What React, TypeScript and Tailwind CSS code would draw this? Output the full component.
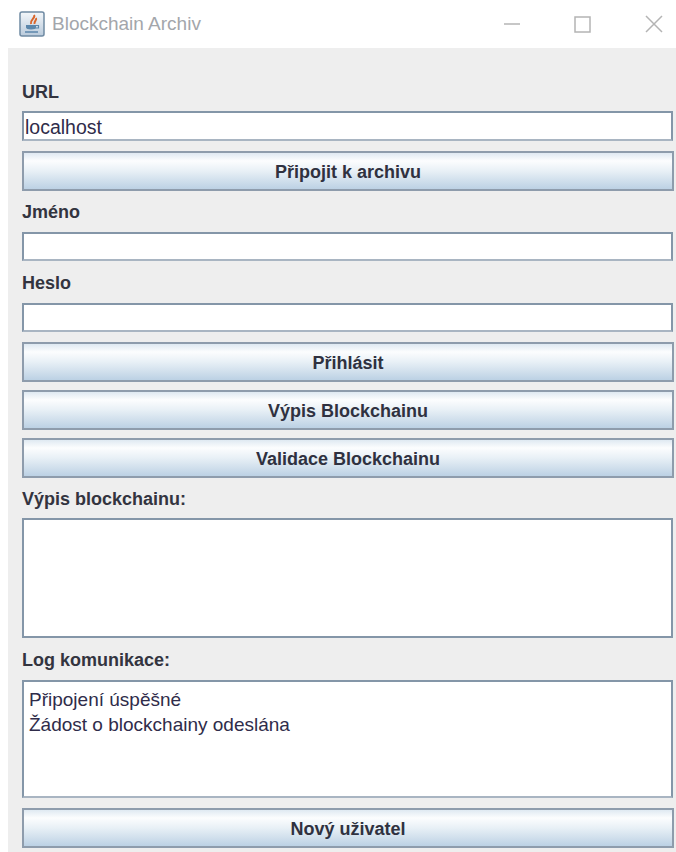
const font = "font-['Liberation_Sans',Arial,sans-serif]";

function Field({ value, className }: { value?: string; className: string }) {
  return (
    <div
      className={`${className} flex items-center bg-white border-2 border-[#8496a8] border-b-[#a9b5c2] pl-[1px] pt-[3px] text-[19.500px] leading-none text-[#2f2c4a]`}
    >
      {value}
    </div>
  );
}

function SwingButton({ label, className = "" }: { label: string; className?: string }) {
  return (
    <button
      className={`${className} h-10 w-full shrink-0 flex items-center justify-center border-2 border-[#8e9cac] pt-[2px] bg-[linear-gradient(to_bottom,#dfe9f2_0%,#fcfdfe_22%,#e8f0f6_50%,#bcd1e4_100%)] text-[18px] leading-none font-bold text-[#2f3140]`}
    >
      {label}
    </button>
  );
}

function Label({ text, className }: { text: string; className: string }) {
  return <div className={`${className} flex items-center text-[18px] leading-none font-bold text-[#33343f]`}>{text}</div>;
}

function JavaIcon() {
  return (
    <svg width="26" height="26" viewBox="0 0 26 26">
      <defs>
        <linearGradient id="tile" x1="0" y1="0" x2="0" y2="1">
          <stop offset="0" stopColor="#f4f7fa" />
          <stop offset="1" stopColor="#b9cadb" />
        </linearGradient>
      </defs>
      <rect x="1" y="1" width="24" height="24" rx="2" fill="url(#tile)" stroke="#6f8aa3" strokeWidth="1.500" />
      <path d="M15 4c2 3-4 4-3 9M17 7c1 2-2 3-1.500 6" fill="none" stroke="#d9652b" strokeWidth="2" />
      <path d="M7 14h10v2.500c0 1-2 2-5 2s-5-1-5-2z" fill="#5b86ab" />
      <path d="M17 14.500h2.500v2.500H16" fill="none" stroke="#5b86ab" strokeWidth="1.200" />
      <path d="M6 21h13" stroke="#5b86ab" strokeWidth="1.500" />
    </svg>
  );
}

export default function App() {
  return (
    <div className={`${font} w-[676px] h-[852px] overflow-hidden flex flex-col bg-white`}>
      {/* title bar */}
      <div className="h-12 shrink-0 flex items-center pl-[19px]">
        <JavaIcon />
        <span className="ml-[7px] text-[19px] text-[#a3a6ab]">Blockchain Archiv</span>
        <div className="ml-auto flex items-center text-[#b4b4b4]">
          <svg width="18" height="4" viewBox="0 0 18 4" className="mr-[53px]">
            <path d="M1 2h16" stroke="currentColor" strokeWidth="1.500" />
          </svg>
          <svg width="17" height="17" viewBox="0 0 17 17" className="mr-[54px]">
            <rect x="1" y="1" width="15" height="15" fill="none" stroke="currentColor" strokeWidth="1.500" />
          </svg>
          <svg width="18" height="18" viewBox="0 0 18 18" className="mr-[13px]">
            <path d="M1 1l16 16M17 1L1 17" stroke="currentColor" strokeWidth="1.500" />
          </svg>
        </div>
      </div>

      {/* form panel */}
      <div className="flex-1 ml-2 bg-[#eeeeee] pl-[14px] pr-[2px] flex flex-col">
        <Label text="URL" className="h-[63px] pt-[25px]" />
        <Field value="localhost" className="h-[30px] mr-[1px]" />
        <SwingButton label="Připojit k archivu" className="mt-[10px]" />
        <Label text="Jméno" className="h-[41px] pt-[1px]" />
        <Field className="h-[29px] mr-[1px]" />
        <Label text="Heslo" className="h-[42px] pt-[1px]" />
        <Field className="h-[29px] mr-[1px]" />
        <SwingButton label="Přihlásit" className="mt-[10px]" />
        <SwingButton label="Výpis Blockchainu" className="mt-2" />
        <SwingButton label="Validace Blockchainu" className="mt-2" />
        <Label text="Výpis blockchainu:" className="h-10 pt-[2px]" />
        <div className="h-[120px] shrink-0 bg-white border-2 border-[#8496a8] mr-[1px]" />
        <Label text="Log komunikace:" className="h-[42px] pt-[2px]" />
        <div className="h-[118px] shrink-0 bg-white border-2 border-[#8496a8] border-b-[#a9b5c2] mr-[1px] pl-[5px] pt-[5px] text-[19px] leading-[25px] text-[#2f2c4a]">
          <div>Připojení úspěšné</div>
          <div>Žádost o blockchainy odeslána</div>
        </div>
        <SwingButton label="Nový uživatel" className="mt-[10px]" />
      </div>
    </div>
  );
}
